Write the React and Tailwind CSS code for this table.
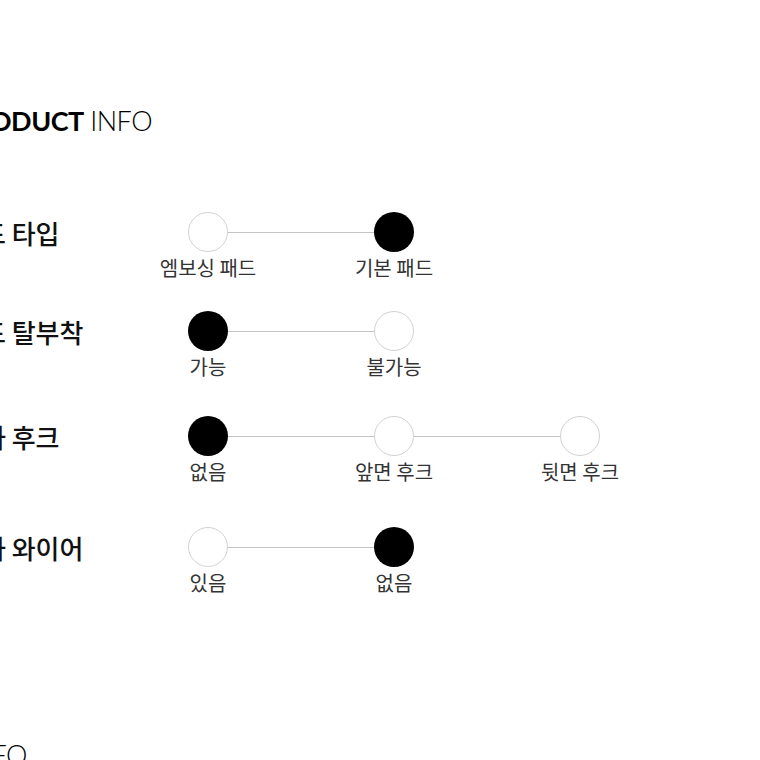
import React from "react";

const ROWS = [
  { label: "패드 타입", mt: "mt-[78px]", options: ["엠보싱 패드", "기본 패드"], active: 1 },
  { label: "패드 탈부착", mt: "mt-[31px]", options: ["가능", "불가능"], active: 0 },
  { label: "브라 후크", mt: "mt-[37px]", options: ["없음", "앞면 후크", "뒷면 후크"], active: 0 },
  { label: "브라 와이어", mt: "mt-[43px]", options: ["있음", "없음"], active: 1 },
];

function OptionRow({ label, mt, options, active }) {
  return (
    <div className={`flex items-start ${mt}`}>
      {/* row title */}
      <div className="w-[230px] h-10 flex items-center shrink-0 text-[26px] font-medium text-[#111] whitespace-nowrap">
        {label}
      </div>
      {/* option scale */}
      <div className="flex items-start">
        {options.map((opt, i) => (
          <React.Fragment key={opt}>
            {i > 0 && (
              <div className="w-[146px] h-10 flex items-center">
                <div className="w-full h-px bg-[#c4c4c4]" />
              </div>
            )}
            <div className="w-10 flex flex-col items-center">
              <div
                className={`w-10 h-10 rounded-full ${
                  i === active ? "bg-black" : "bg-white border border-[#d2d2d2]"
                }`}
              />
              <div className="mt-[4px] leading-6 text-[20px] text-[#333] whitespace-nowrap">
                {opt}
              </div>
            </div>
          </React.Fragment>
        ))}
      </div>
    </div>
  );
}

export default function App() {
  return (
    <div
      className="w-[760px] h-[760px] overflow-hidden bg-white"
      style={{ fontFamily: '"Noto Sans CJK KR", "Noto Sans", sans-serif' }}
    >
      <div className="ml-[-42px] pt-[107px]">
        <h2 className="ml-[-1px] text-[27px] leading-none tracking-[-0.5px] text-black font-['Lato','Noto_Sans_CJK_KR',sans-serif]">
          <span className="font-bold">PRODUCT</span> <span className="font-light">INFO</span>
        </h2>

        {ROWS.map((row) => (
          <OptionRow key={row.label} {...row} />
        ))}

        <h2 className="mt-[146px] ml-[-52px] text-[27px] leading-none tracking-[-0.5px] text-black font-['Lato','Noto_Sans_CJK_KR',sans-serif]">
          <span className="font-bold">SIZE</span> <span className="font-light">INFO</span>
        </h2>
      </div>
    </div>
  );
}
